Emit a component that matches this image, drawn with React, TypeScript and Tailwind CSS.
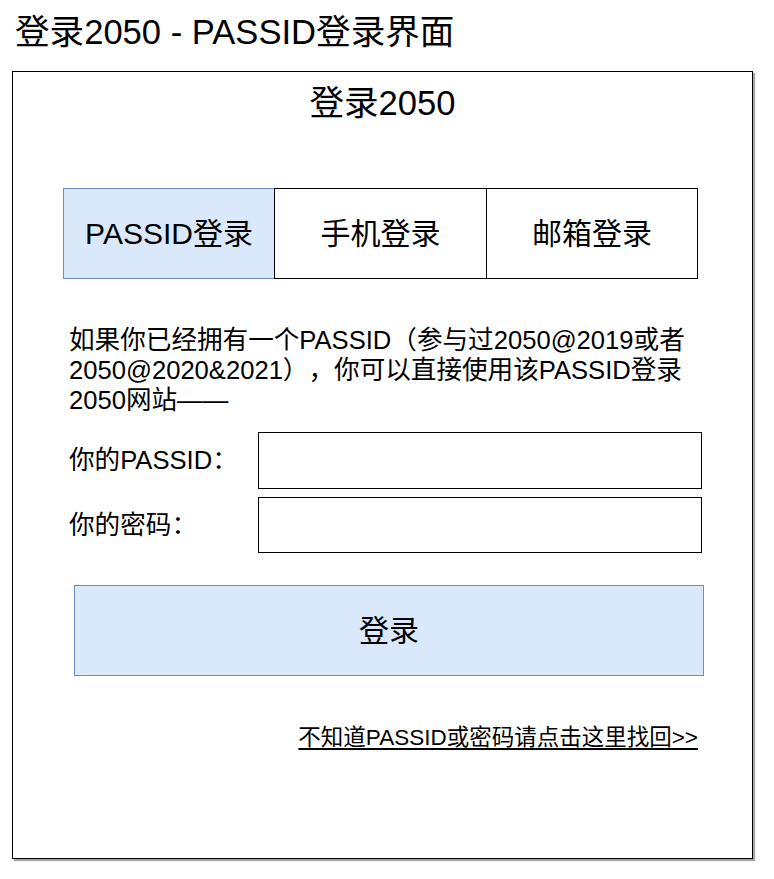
const font = { fontFamily: '"Liberation Sans", "Noto Sans CJK SC", sans-serif' };

const App = () => {
  return (
    <div className="w-[774px] h-[879px] bg-white text-black [text-spacing-trim:space-all]" style={font}>
      <div className="h-[71px] pl-[15px] pt-[12px] text-[34.6px] leading-[40px]">
        登录2050 - PASSID登录界面
      </div>

      <div className="ml-[12px] w-[741px] h-[788px] border border-black bg-white shadow-[2px_2px_1px_rgba(0,0,0,0.35)]">
        <h1 className="pt-[11px] text-center text-[34.6px] leading-[40px]">登录2050</h1>

        <div className="mt-[65px] ml-[50px] flex h-[91px]">
          <div className="w-[212px] flex items-center justify-center border border-[#6c8ebf] bg-[#dae8fc] text-[30px]">
            PASSID登录
          </div>
          <div className="w-[213px] -ml-px flex items-center justify-center border border-black text-[30px]">
            手机登录
          </div>
          <div className="w-[212px] -ml-px flex items-center justify-center border border-black text-[30px]">
            邮箱登录
          </div>
        </div>

        <p className="mt-[46px] ml-[56px] text-[25.6px] leading-[30px] whitespace-nowrap">
          <span className="block">如果你已经拥有一个PASSID（参与过2050@2019或者</span>
          <span className="block">2050@2020&amp;2021），你可以直接使用该PASSID登录</span>
          <span className="block">2050网站——</span>
        </p>

        <div className="mt-[17px] ml-[56px] flex flex-col gap-[8px]">
          <div className="flex items-center">
            <label className="w-[189px] text-[25.6px]">你的PASSID：</label>
            <div className="w-[444px] h-[57px] border border-black"></div>
          </div>
          <div className="flex items-center">
            <label className="w-[189px] text-[25.6px]">你的密码：</label>
            <div className="w-[444px] h-[56px] border border-black"></div>
          </div>
        </div>

        <button className="mt-[32px] ml-[61px] w-[630px] h-[91px] flex items-center justify-center border border-[#6c8ebf] bg-[#dae8fc] text-[30px]">
          登录
        </button>

        <div className="mt-[47px] pr-[54px] flex justify-end">
          <a className="text-[22.5px] leading-[30px] underline underline-offset-[3px]">
            不知道PASSID或密码请点击这里找回&gt;&gt;
          </a>
        </div>
      </div>
    </div>
  );
};

export default App;
